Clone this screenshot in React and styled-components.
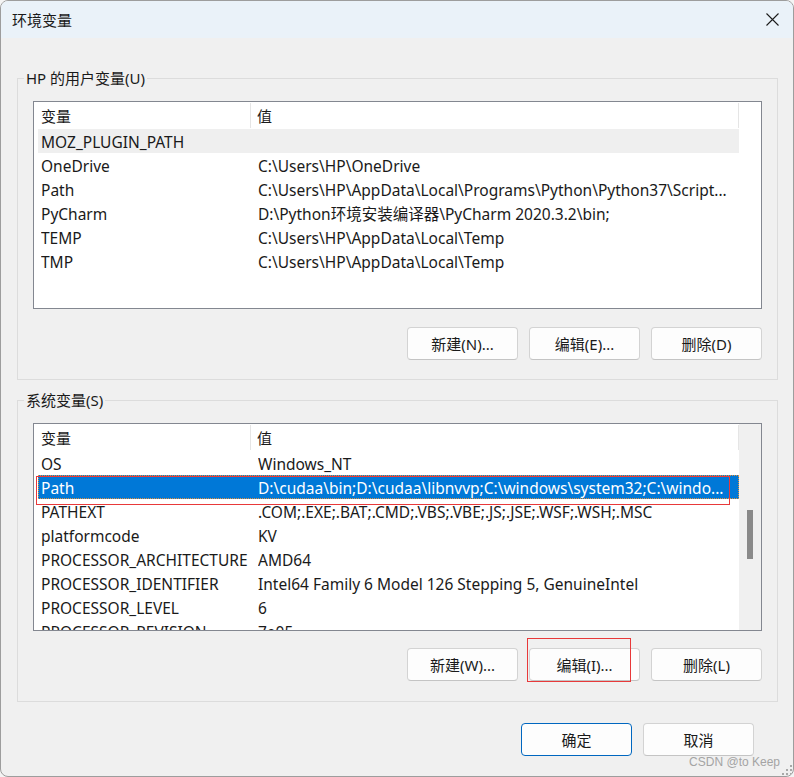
import React from 'react'
import styled, { createGlobalStyle } from 'styled-components'

const userVars = [
  { name: 'MOZ_PLUGIN_PATH', value: '', state: 'muted' },
  { name: 'OneDrive', value: String.raw`C:\Users\HP\OneDrive` },
  { name: 'Path', value: String.raw`C:\Users\HP\AppData\Local\Programs\Python\Python37\Script...` },
  { name: 'PyCharm', value: String.raw`D:\Python环境安装编译器\PyCharm 2020.3.2\bin;` },
  { name: 'TEMP', value: String.raw`C:\Users\HP\AppData\Local\Temp` },
  { name: 'TMP', value: String.raw`C:\Users\HP\AppData\Local\Temp` },
]

const systemVars = [
  { name: 'OS', value: 'Windows_NT' },
  { name: 'Path', value: String.raw`D:\cudaa\bin;D:\cudaa\libnvvp;C:\windows\system32;C:\windo...`, state: 'selected' },
  { name: 'PATHEXT', value: '.COM;.EXE;.BAT;.CMD;.VBS;.VBE;.JS;.JSE;.WSF;.WSH;.MSC' },
  { name: 'platformcode', value: 'KV' },
  { name: 'PROCESSOR_ARCHITECTURE', value: 'AMD64' },
  { name: 'PROCESSOR_IDENTIFIER', value: 'Intel64 Family 6 Model 126 Stepping 5, GenuineIntel' },
  { name: 'PROCESSOR_LEVEL', value: '6' },
  { name: 'PROCESSOR_REVISION', value: '7e05' },
]

function VarList({ rows, scroll, marked }) {
  return (
    <List>
      <ListBody>
        <Header>
          <HeaderCell $w="217px">变量</HeaderCell>
          <HeaderCell>值</HeaderCell>
        </Header>
        <Rows>
          {rows.map((r) => (
            <Row key={r.name} $state={r.state}>
              <Cell>{r.name}</Cell>
              <Cell>{r.value}</Cell>
            </Row>
          ))}
        </Rows>
      </ListBody>
      {scroll ? (
        <ScrollTrack>
          <Thumb />
        </ScrollTrack>
      ) : (
        <ScrollSpace />
      )}
      {marked && <RowMark />}
    </List>
  )
}

function App() {
  return (
    <>
      <GlobalStyle />
      <Window>
        <TitleBar>
          <span>环境变量</span>
          <svg width="13" height="13" viewBox="0 0 13 13">
            <path d="M0.5 0.5 L12.5 12.5 M12.5 0.5 L0.5 12.5" stroke="#1c1c1c" strokeWidth="1.1" fill="none" />
          </svg>
        </TitleBar>

        <Body>
          <Group>
            <Legend>HP 的用户变量(U)</Legend>
            <VarList rows={userVars} />
            <ButtonRow>
              <Button>新建(N)...</Button>
              <Button>编辑(E)...</Button>
              <Button>删除(D)</Button>
            </ButtonRow>
          </Group>

          <Group $top="10px" $bottom="20px">
            <Legend>系统变量(S)</Legend>
            <VarList rows={systemVars} scroll marked />
            <ButtonRow $top="17px">
              <Button>新建(W)...</Button>
              <Button>
                编辑(I)...
                <ButtonMark />
              </Button>
              <Button>删除(L)</Button>
            </ButtonRow>
          </Group>

          <Footer>
            <Button $primary>确定</Button>
            <Button>取消</Button>
          </Footer>
        </Body>

        <Watermark>CSDN @to Keep</Watermark>
        <Grip width="14" height="14" viewBox="0 0 14 14">
          {[[11, 3], [7, 7], [11, 7], [3, 11], [7, 11], [11, 11]].map(([x, y]) => (
            <rect key={x + '-' + y} x={x} y={y} width="2" height="2" fill="#a8a8a8" />
          ))}
        </Grip>
      </Window>
    </>
  )
}

export default App

const GlobalStyle = createGlobalStyle`
  body {
    margin: 0;
    background: #f4f4f4;
    font-family: "Noto Sans", "Noto Sans CJK SC", sans-serif;
    color: #1a1a1a;
  }
  * { box-sizing: border-box; }
`

const Window = styled.div`
  position: relative;
  width: 794px;
  height: 777px;
  border: 1px solid #9d9d9d;
  border-radius: 8px;
  overflow: hidden;
  background: #f0f0f0;
  display: flex;
  flex-direction: column;
`

const TitleBar = styled.div`
  height: 37px;
  flex-shrink: 0;
  background: #eaf2f9;
  display: flex;
  align-items: center;
  justify-content: space-between;
  padding: 0 14px 0 11px;
  font-size: 15px;
  color: #1a1a1a;
`

const Body = styled.div`
  flex: 1;
  display: flex;
  flex-direction: column;
  padding: 30px 15px 0 16px;
`

const Group = styled.fieldset`
  margin: ${(p) => p.$top || '0'} 0 0 0;
  padding: 13px 15px ${(p) => p.$bottom || '19px'} 15px;
  border: 1px solid #dcdcdc;
  min-width: 0;
`

const Legend = styled.legend`
  padding: 0 2px;
  margin-left: -9px;
  font-size: 15px;
  line-height: 20px;
  color: #1a1a1a;
`

const List = styled.div`
  position: relative;
  height: 208px;
  border: 1px solid #838790;
  background: #fff;
  display: flex;
  overflow: hidden;
`

const ListBody = styled.div`
  width: 705px;
  display: flex;
  flex-direction: column;
`

const Header = styled.div`
  height: 27px;
  display: flex;
  flex-shrink: 0;
`

const HeaderCell = styled.div`
  width: ${(p) => p.$w || 'auto'};
  flex: ${(p) => (p.$w ? 'none' : '1')};
  height: 25px;
  margin-top: 1px;
  padding: 2px 0 0 ${(p) => (p.$w ? '7px' : '6px')};
  border-right: 1px solid #e5e5e5;
  font-size: 15px;
  line-height: 23px;
`

const Rows = styled.div`
  padding-left: 4px;
`

const Row = styled.div`
  height: 24px;
  display: grid;
  grid-template-columns: 217px 1fr;
  padding: 1px 0 0 3px;
  font-size: 15.5px;
  line-height: 24px;
  white-space: nowrap;
  background: ${(p) => (p.$state === 'selected' ? '#0078d7' : p.$state === 'muted' ? '#efefef' : 'transparent')};
  color: ${(p) => (p.$state === 'selected' ? '#fff' : '#1a1a1a')};
  outline: ${(p) => (p.$state === 'selected' ? '1px dotted #e0913f' : 'none')};
  outline-offset: -1px;
`

const Cell = styled.span`
  overflow: hidden;
`

const ScrollTrack = styled.div`
  width: 22px;
  background: #f0f0f0;
  padding: 86px 0 0 8px;
`

const Thumb = styled.div`
  width: 6px;
  height: 49px;
  background: #8a8a8a;
`

const ScrollSpace = styled.div`
  width: 22px;
`

const RowMark = styled.span`
  position: absolute;
  left: 2px;
  top: 52px;
  width: 694px;
  height: 29px;
  border: 1px solid #e8393a;
  pointer-events: none;
`

const ButtonRow = styled.div`
  margin-top: ${(p) => p.$top || '18px'};
  display: flex;
  justify-content: flex-end;
  gap: 11px;
`

const Button = styled.button`
  position: relative;
  width: 111px;
  height: 33px;
  background: #fdfdfd;
  border: 1px solid ${(p) => (p.$primary ? '#0067c0' : '#d3d3d3')};
  border-bottom-color: ${(p) => (p.$primary ? '#0067c0' : '#c4c4c4')};
  border-radius: 4px;
  font-family: "Noto Sans", "Noto Sans CJK SC", sans-serif;
  font-size: 15px;
  color: #1a1a1a;
  padding: 0;
`

const ButtonMark = styled.span`
  position: absolute;
  left: -3px;
  top: -11px;
  width: 104px;
  height: 44px;
  border: 1px solid #e8393a;
`

const Footer = styled.div`
  margin-top: 21px;
  margin-right: 24px;
  display: flex;
  justify-content: flex-end;
  gap: 11px;
`

const Watermark = styled.div`
  position: absolute;
  right: 13px;
  bottom: 7px;
  font-family: "Liberation Sans", Arial, sans-serif;
  font-size: 12px;
  color: #a4a4a4;
`

const Grip = styled.svg`
  position: absolute;
  right: 0;
  bottom: 0;
`
